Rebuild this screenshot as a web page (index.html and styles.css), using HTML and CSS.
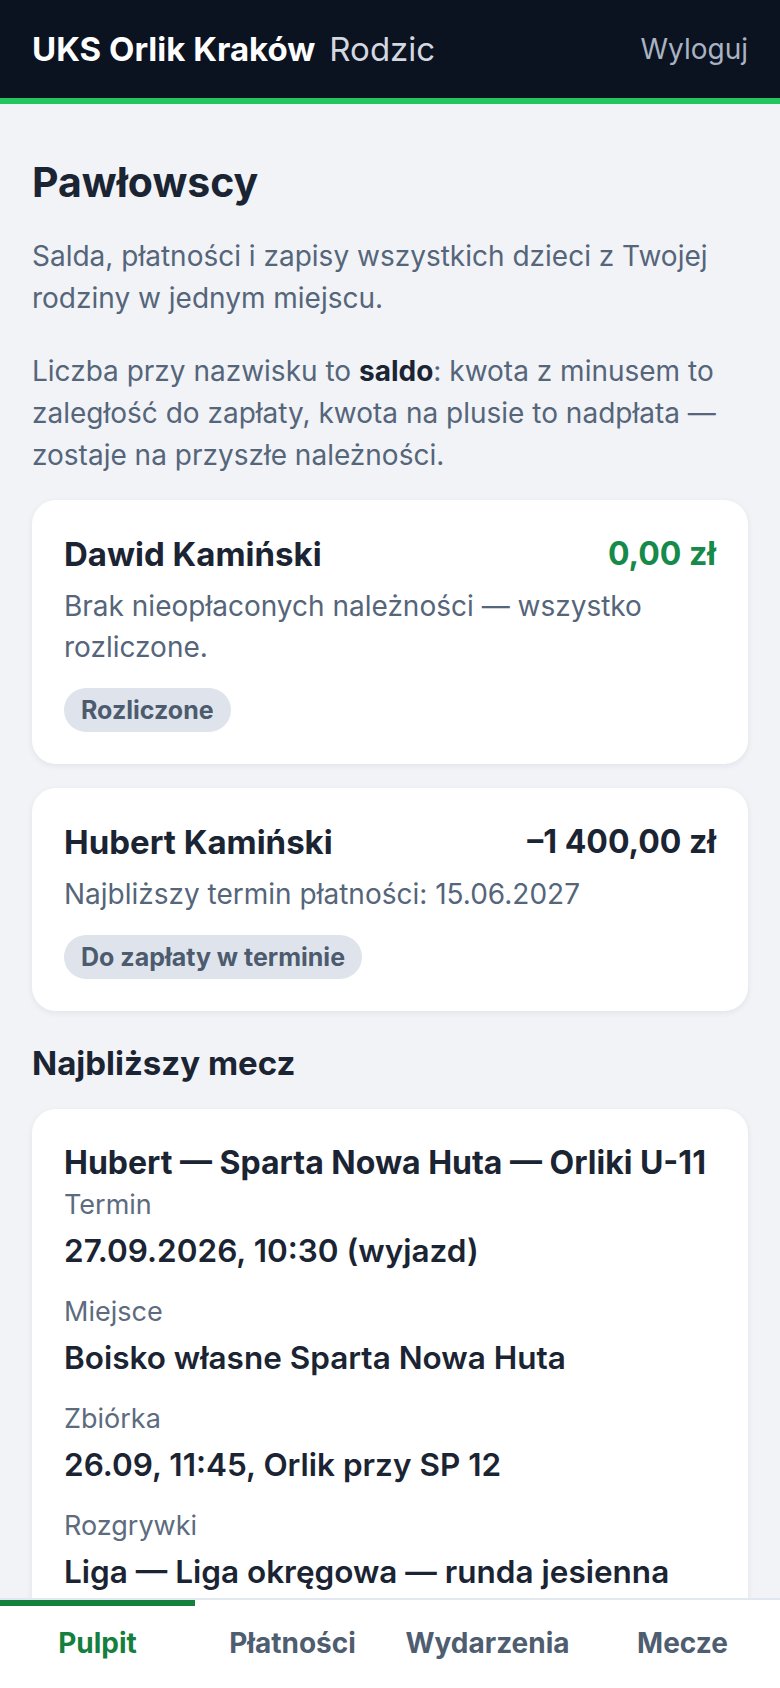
FILE: index.html
```html
<!DOCTYPE html>
<html lang="pl">
  <head>
    <meta charset="UTF-8" />
    <meta name="viewport" content="width=device-width, initial-scale=1.0" />
    <title>UKS Orlik Kraków — Rodzic</title>
    <link rel="stylesheet" href="styles.css">
  </head>
  <body>
    <header class="topbar">
      <div class="brand">
        <span class="club">UKS Orlik Kraków</span>
        <span class="role">Rodzic</span>
      </div>
      <a class="logout" href="#">Wyloguj</a>
    </header>

    <main class="content">
      <h1 class="family">Pawłowscy</h1>
      <p class="lead">Salda, płatności i zapisy wszystkich dzieci z Twojej rodziny w jednym miejscu.</p>
      <p class="lead">Liczba przy nazwisku to <b>saldo</b>: kwota z minusem to zaległość do zapłaty, kwota na plusie to nadpłata — zostaje na przyszłe należności.</p>

      <div class="card">
        <div class="card-head">
          <span class="kid">Dawid Kamiński</span>
          <span class="amount ok">0,00 zł</span>
        </div>
        <p class="note">Brak nieopłaconych należności — wszystko rozliczone.</p>
        <span class="badge">Rozliczone</span>
      </div>

      <div class="card">
        <div class="card-head">
          <span class="kid">Hubert Kamiński</span>
          <span class="amount">–1&nbsp;400,00 zł</span>
        </div>
        <p class="note">Najbliższy termin płatności: 15.06.2027</p>
        <span class="badge">Do zapłaty w terminie</span>
      </div>

      <h2 class="section">Najbliższy mecz</h2>
      <div class="card">
        <div class="match-title">Hubert — Sparta Nowa Huta — Orliki U-11</div>
        <dl class="facts">
          <div class="fact">
            <dt>Termin</dt>
            <dd>27.09.2026, 10:30 (wyjazd)</dd>
          </div>
          <div class="fact">
            <dt>Miejsce</dt>
            <dd>Boisko własne Sparta Nowa Huta</dd>
          </div>
          <div class="fact">
            <dt>Zbiórka</dt>
            <dd>26.09, 11:45, Orlik przy SP 12</dd>
          </div>
          <div class="fact">
            <dt>Rozgrywki</dt>
            <dd>Liga — Liga okręgowa — runda jesienna</dd>
          </div>
        </dl>
      </div>
    </main>

    <nav class="tabs">
      <a class="tab active" href="#">Pulpit</a>
      <a class="tab" href="#">Płatności</a>
      <a class="tab" href="#">Wydarzenia</a>
      <a class="tab" href="#">Mecze</a>
    </nav>
  </body>
</html>
```

FILE: styles.css
```css
* {
  margin: 0;
  padding: 0;
  box-sizing: border-box;
}
body {
  height: 100vh;
  display: flex;
  flex-direction: column;
  overflow: hidden;
  background: #f1f3f7;
  color: #1b2433;
  font-family: Inter, "Noto Sans", sans-serif;
}
a {
  text-decoration: none;
}

.topbar {
  height: 104px;
  flex-shrink: 0;
  display: flex;
  align-items: center;
  justify-content: space-between;
  padding: 0 32px;
  background: #0b1220;
  border-bottom: 6px solid #22c55e;
}
.brand {
  display: flex;
  align-items: baseline;
  gap: 14px;
}
.club {
  color: #fff;
  font-size: 33px;
  font-weight: 700;
}
.role {
  color: #d3d8e0;
  font-size: 33px;
}
.logout {
  color: #a9b3c2;
  font-size: 28px;
}

.content {
  flex: 1;
  overflow: hidden;
  padding: 50px 32px 0;
}
.family {
  font-size: 41px;
  line-height: 56px;
  font-weight: 700;
  margin-bottom: 25px;
}
.lead {
  font-size: 28px;
  line-height: 42px;
  color: #55657a;
  margin-bottom: 31px;
}
.lead b {
  color: #1b2433;
}
.lead + .lead {
  margin-bottom: 24px;
}

.card {
  background: #fff;
  border-radius: 24px;
  padding: 32px;
  margin-bottom: 24px;
  box-shadow: 0 2px 6px rgba(15, 23, 42, 0.07);
}
.card-head {
  display: flex;
  justify-content: space-between;
  align-items: center;
  line-height: 44px;
}
.kid {
  font-size: 33px;
  font-weight: 700;
}
.amount {
  font-size: 32px;
  font-weight: 700;
}
.amount.ok {
  color: #168a4a;
}
.note {
  font-size: 28px;
  line-height: 41px;
  color: #55657a;
  margin: 10px 0 20px;
}
.badge {
  display: inline-block;
  background: #dfe4ec;
  color: #4d5b6e;
  font-size: 25px;
  font-weight: 700;
  line-height: 28px;
  padding: 8px 17px;
  border-radius: 999px;
}

.section {
  font-size: 33px;
  line-height: 44px;
  font-weight: 700;
  margin: 30px 0 24px;
}
.match-title {
  font-size: 32px;
  line-height: 44px;
  font-weight: 700;
}
.facts {
  display: flex;
  flex-direction: column;
  gap: 21px;
  margin-top: 2px;
}
.fact dt {
  font-size: 27px;
  line-height: 36px;
  color: #5d6b7e;
}
.fact dd {
  font-size: 31.5px;
  line-height: 44px;
  font-weight: 600;
  margin-top: 6px;
}

.tabs {
  height: 90px;
  flex-shrink: 0;
  display: grid;
  grid-template-columns: repeat(4, 1fr);
  background: #fff;
  border-top: 2px solid #e2e8f0;
}
.tab {
  display: flex;
  align-items: center;
  justify-content: center;
  padding-bottom: 8px;
  border-top: 6px solid transparent;
  color: #4f5d70;
  font-size: 28px;
  font-weight: 700;
}
.tab.active {
  color: #15803d;
  border-top-color: #15803d;
}
```
